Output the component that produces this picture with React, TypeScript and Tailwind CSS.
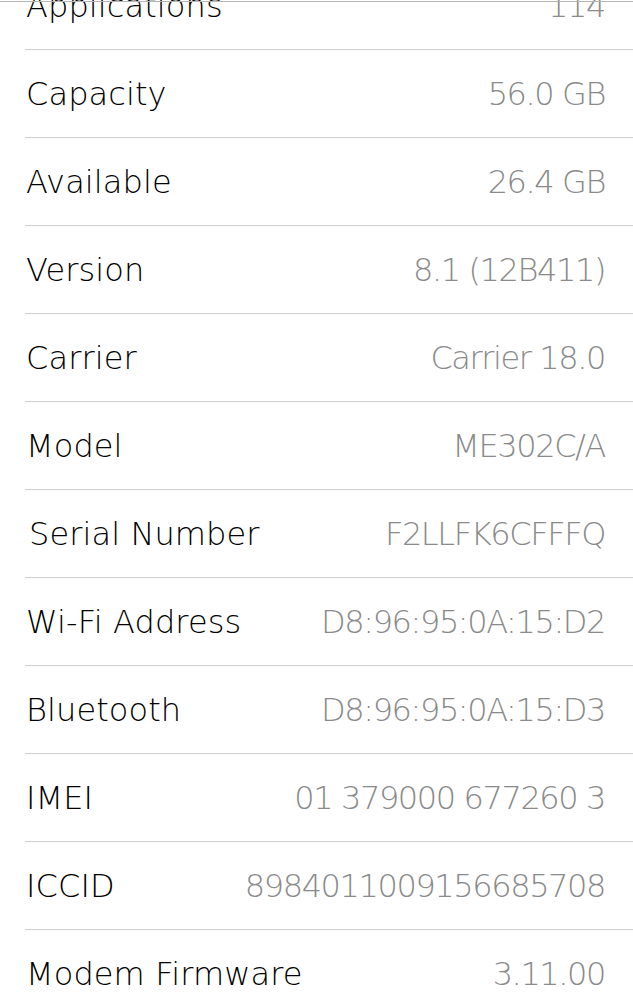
import React from "react";

const rows: { label: string; value: string; shift?: boolean }[] = [
  { label: "Applications", value: "114" },
  { label: "Capacity", value: "56.0 GB" },
  { label: "Available", value: "26.4 GB" },
  { label: "Version", value: "8.1 (12B411)" },
  { label: "Carrier", value: "Carrier 18.0" },
  { label: "Model", value: "ME302C/A" },
  { label: "Serial Number", value: "F2LLFK6CFFFQ", shift: true },
  { label: "Wi-Fi Address", value: "D8:96:95:0A:15:D2" },
  { label: "Bluetooth", value: "D8:96:95:0A:15:D3" },
  { label: "IMEI", value: "01 379000 677260 3" },
  { label: "ICCID", value: "8984011009156685708" },
  { label: "Modem Firmware", value: "3.11.00" },
];

export default function App() {
  return (
    <div
      className="relative w-[633px] h-[1008px] overflow-hidden bg-white"
      style={{ fontFamily: '"DejaVu Sans", "Liberation Sans", sans-serif' }}
    >
      <div className="absolute left-0 right-0 top-[1px] h-px bg-[#b5b5b5] z-10" />
      <div className="-mt-[38px]">
        {rows.map((r) => (
          <div
            key={r.label}
            className="ml-[25px] h-[88px] flex items-center justify-between border-b border-[#cfcfcf] pr-[28px] text-[32px] font-extralight leading-none"
          >
            <span
              className={
                r.shift
                  ? "text-black pl-[4px] tracking-[0.1px]"
                  : "text-black pl-[1px] tracking-[0.1px]"
              }
            >
              {r.label}
            </span>
            <span className="text-[#8a8a8a] tracking-[-1.4px]">{r.value}</span>
          </div>
        ))}
      </div>
    </div>
  );
}
